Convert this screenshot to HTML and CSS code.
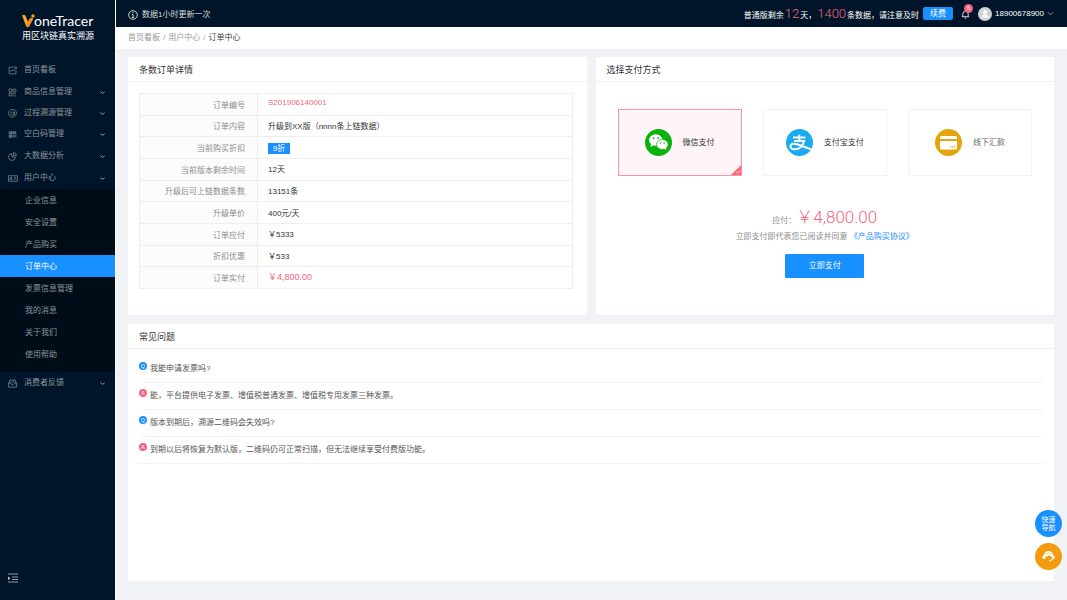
FILE: index.html
```html
<!DOCTYPE html>
<html lang="zh-CN">
<head>
<meta charset="utf-8">
<meta name="viewport" content="width=device-width, initial-scale=1">
<title>订单中心</title>
<link rel="stylesheet" href="styles.css">
</head>
<body>
<div class="app">
  <aside class="sidebar">
    <div class="brand">
      <div class="logo">
        <svg class="logo-mark" viewBox="0 0 13 14" aria-hidden="true"><path d="M0 1.500C1.500.5 3 .7 3.600 2L6 7.500l2-3.300c.9-1 2.700-.5 3.300.5L7.500 12c-.9 1.700-2.700 1.700-3.500 0z" fill="#f5941d"/><path d="M1.200 1.300C3 3 4.500 5.500 5.500 10L3.500 8z" fill="#ffb83d"/><circle cx="11" cy="2" r="1.700" fill="#f9a11b"/></svg>
        <span>oneTracer</span>
      </div>
      <p class="slogan">用区块链真实溯源</p>
    </div>
    <nav class="menu">
      <a class="item" href="#"><svg class="ico" viewBox="0 0 16 16"><path d="M14 7v7H2V2h8M4 10l3-3 2 2 5-6M11 2h4v3"/></svg><span>首页看板</span></a>
      <a class="item" href="#"><svg class="ico" viewBox="0 0 16 16"><path d="M2 2h5v5H2zM9 2h5v5H9zM2 9h5v5H2zM9 10h5M9 14h5"/></svg><span>商品信息管理</span><svg class="chev" viewBox="0 0 8 8"><path d="M1.500 3 4 5l2.500-2"/></svg></a>
      <a class="item compact" href="#"><svg class="ico" viewBox="0 0 16 16"><path d="M13 12.500A7 7 0 1 1 15 8c0 4-4 4-4 1V5M11 8a3 3 0 1 1-6 0 3 3 0 0 1 6 0"/></svg><span>过程溯源管理</span><svg class="chev" viewBox="0 0 8 8"><path d="M1.500 3 4 5l2.500-2"/></svg></a>
      <a class="item" href="#"><svg class="ico" viewBox="0 0 16 16"><path d="M2 3h5v4H2zM9 3h5v4H9zM2 9h5v4H2zM9 9v4M11.500 9v4M14 9v4M2 5h12M2 11h5"/></svg><span>空白码管理</span><svg class="chev" viewBox="0 0 8 8"><path d="M1.500 3 4 5l2.500-2"/></svg></a>
      <a class="item" href="#"><svg class="ico" viewBox="0 0 16 16"><path d="M7 3a6 6 0 1 0 6 6H7zM9.500 1A6 6 0 0 1 15 6.500H9.500z"/></svg><span>大数据分析</span><svg class="chev" viewBox="0 0 8 8"><path d="M1.500 3 4 5l2.500-2"/></svg></a>
      <a class="item" href="#"><svg class="ico wide" viewBox="0 0 18 16"><path d="M1 3h16v10H1zM3 11c0-3 5-3 5 0M7 7a1.500 1.500 0 1 1-3 0 1.500 1.500 0 0 1 3 0M11 6h4M11 9h4"/></svg><span>用户中心</span><svg class="chev" viewBox="0 0 8 8"><path d="M1.500 3 4 5l2.500-2"/></svg></a>
      <div class="submenu">
        <a href="#">企业信息</a>
        <a href="#">安全设置</a>
        <a href="#">产品购买</a>
        <a class="active" href="#" aria-current="page">订单中心</a>
        <a href="#">发票信息管理</a>
        <a href="#">我的消息</a>
        <a href="#">关于我们</a>
        <a href="#">使用帮助</a>
      </div>
      <a class="item" href="#"><svg class="ico" viewBox="0 0 16 16"><path d="M3 7V2h10v5M1 6v8.500h14V6L8 10.500zM5.500 4.500l2 2 3-3"/></svg><span>消费者反馈</span><svg class="chev" viewBox="0 0 8 8"><path d="M1.500 3 4 5l2.500-2"/></svg></a>
    </nav>
    <button class="collapse" type="button" aria-label="收起菜单"><svg viewBox="0 0 10 10"><path d="M0 1h10M4 4h6M4 6.500h6M0 9h10" stroke="#8e9ba6" stroke-width="1" fill="none"/><path d="M0 3.500 2.500 5.200 0 7z" fill="#c5ccd2"/></svg></button>
  </aside>

  <div class="page">
    <header class="topbar">
      <div class="notice">
        <svg viewBox="0 0 10 10" aria-hidden="true"><circle cx="5" cy="5" r="4.300"/><path d="M5 2v1M4 4.300h1v3M3.800 7.400h2.400"/></svg>
        <span>数据1小时更新一次</span>
      </div>
      <div class="account">
        <p class="quota"><span>普通版剩余</span><b>12</b><span>天，</span><b>1400</b><span>条数据，请注意及时</span></p>
        <button class="renew" type="button">续费</button>
        <button class="bell" type="button" aria-label="消息"><svg viewBox="0 0 10 10"><path d="M1 8h8M2 8V5a3 3 0 0 1 6 0v3M4 9.500h2M5 1v1"/></svg><span class="badge">6</span></button>
        <button class="user" type="button">
          <svg class="avatar" viewBox="0 0 14 14" aria-hidden="true"><circle cx="7" cy="7" r="7" fill="#d0d3d6"/><circle cx="7" cy="5.300" r="2.100" fill="#fff"/><path d="M3.300 10.500c0-4 7.400-4 7.400 0z" fill="#fff"/></svg>
          <span>18900678900</span>
          <svg class="down" viewBox="0 0 8 8" aria-hidden="true"><path d="M1 2.500 4 5.500l3-3"/></svg>
        </button>
      </div>
    </header>
    <nav class="crumbs" aria-label="导航"><a href="#">首页看板</a><span>/</span><a href="#">用户中心</a><span>/</span><strong>订单中心</strong></nav>

    <main class="content">
      <div class="columns">
        <section class="card">
          <h2>条数订单详情</h2>
          <div class="detail">
            <table>
              <tr><th scope="row">订单编号</th><td class="red">S201906140001</td></tr>
              <tr><th scope="row">订单内容</th><td>升级到XX版（nnnn条上链数据）</td></tr>
              <tr><th scope="row">当前购买折扣</th><td><span class="tag">9折</span></td></tr>
              <tr><th scope="row">当前版本剩余时间</th><td>12天</td></tr>
              <tr><th scope="row">升级后可上链数据条数</th><td>13151条</td></tr>
              <tr><th scope="row">升级单价</th><td>400元/天</td></tr>
              <tr><th scope="row">订单应付</th><td>￥5333</td></tr>
              <tr><th scope="row">折扣优惠</th><td>￥533</td></tr>
              <tr><th scope="row">订单实付</th><td class="red total">￥4,800.00</td></tr>
            </table>
          </div>
        </section>

        <section class="card">
          <h2>选择支付方式</h2>
          <div class="pay">
            <div class="options">
              <label class="option"><input type="radio" name="pay" checked>
                <svg class="pay-ico" viewBox="0 0 27 27" aria-hidden="true"><circle cx="13.500" cy="13.500" r="13.500" fill="#09b30c"/><ellipse cx="10.800" cy="11" rx="6.800" ry="5.800" fill="#fff"/><path d="M6 14.500 5.500 18l3.500-2z" fill="#fff"/><circle cx="8.500" cy="9.200" r=".9" fill="#09b30c"/><circle cx="13" cy="9.200" r=".9" fill="#09b30c"/><ellipse cx="17.300" cy="15.500" rx="5.900" ry="5" fill="#fff" stroke="#09b30c" stroke-width=".7"/><path d="m19 19.500 2.300 1.600-.4-2.800z" fill="#fff"/><circle cx="15.400" cy="14" r=".8" fill="#09b30c"/><circle cx="19.200" cy="14" r=".8" fill="#09b30c"/></svg>
                <span>微信支付</span>
                <svg class="check" viewBox="0 0 10 10" aria-hidden="true"><path d="M10 0v10H0z" fill="#fb6980"/><path d="m5.300 7 1.300 1.200L9 5.700" fill="none" stroke="#fff" stroke-width=".8"/></svg>
              </label>
              <label class="option"><input type="radio" name="pay">
                <svg class="pay-ico" viewBox="0 0 27 27" aria-hidden="true"><defs><clipPath id="disc"><circle cx="13.500" cy="13.500" r="13.500"/></clipPath></defs><circle cx="13.500" cy="13.500" r="13.500" fill="#1aaaed"/><path clip-path="url(#disc)" d="M7 8.500h12.500M13.300 5.800v6M8 12h10.300c-1.500 4.500-5 8.300-9.300 8.300-3 0-4.500-1.200-4.500-2.800 0-3.300 4.500-3.200 7.500-2C16.500 17.200 20 18.500 27 21" fill="none" stroke="#fff" stroke-width="1.900"/></svg>
                <span>支付宝支付</span>
                <svg class="check" viewBox="0 0 10 10" aria-hidden="true"><path d="M10 0v10H0z" fill="#fb6980"/><path d="m5.300 7 1.300 1.200L9 5.700" fill="none" stroke="#fff" stroke-width=".8"/></svg>
              </label>
              <label class="option"><input type="radio" name="pay">
                <svg class="pay-ico" viewBox="0 0 27 27" aria-hidden="true"><circle cx="13.500" cy="13.500" r="13.500" fill="#e2a50c"/><path d="M6.500 7h14a1.500 1.500 0 0 1 1.500 1.500V10H5V8.500A1.500 1.500 0 0 1 6.500 7zM5 12h17v7a1.500 1.500 0 0 1-1.500 1.500h-14A1.500 1.500 0 0 1 5 19z" fill="#fff"/><path d="M15.200 17.800h5.200" stroke="#e2a50c" stroke-dasharray="1.400 .4"/></svg>
                <span class="light">线下汇款</span>
                <svg class="check" viewBox="0 0 10 10" aria-hidden="true"><path d="M10 0v10H0z" fill="#fb6980"/><path d="m5.300 7 1.300 1.200L9 5.700" fill="none" stroke="#fff" stroke-width=".8"/></svg>
              </label>
            </div>
            <p class="amount"><span>应付：</span><b>￥4,800.00</b></p>
            <p class="agree">立即支付即代表您已阅读并同意 <a href="#">《产品购买协议》</a></p>
            <button class="submit" type="button">立即支付</button>
          </div>
        </section>
      </div>

      <section class="card faq">
        <h2>常见问题</h2>
        <ul>
          <li><i class="q">Q</i><span>我能申请发票吗?</span></li>
          <li><i class="a">A</i><span>能，平台提供电子发票、增值税普通发票、增值税专用发票三种发票。</span></li>
          <li><i class="q">Q</i><span>版本到期后，溯源二维码会失效吗?</span></li>
          <li><i class="a">A</i><span>到期以后将恢复为默认版，二维码仍可正常扫描，但无法继续享受付费版功能。</span></li>
        </ul>
      </section>
    </main>
  </div>

  <div class="floating">
    <button class="quick" type="button">快速<br>导航</button>
    <button class="service" type="button" aria-label="在线客服"><svg viewBox="0 0 14 14"><path d="M2 6a5 5 0 0 1 10 0l1.500.5v2.800l-1.800.5C11 11.500 9.500 12.500 7.500 12.500V11.200c2.500-.3 3.500-2 3.500-4-1.500 0-2.500-.5-3.200-1.500C6.500 7 5 7.300 3.300 7.300c0 1 .2 1.700.7 2.500H2L.5 9V6.500z" fill="#fff"/><path d="M3 4.700C5 2.500 9 2.500 11 4.700" fill="none" stroke="#f39c12" stroke-width=".6"/></svg></button>
  </div>
</div>
</body>
</html>
```
FILE: styles.css
```css
* { box-sizing: border-box; }
body {
  margin: 0;
  background: #f0f2f6;
  color: #333;
  font: 8px/12px "Liberation Sans", "Noto Sans CJK SC", sans-serif;
}
h2, p, ul { margin: 0; padding: 0; }
ul { list-style: none; }
a { color: inherit; text-decoration: none; }
button { margin: 0; padding: 0; border: 0; background: none; color: inherit; font: inherit; cursor: pointer; }
svg { display: block; flex: none; }
.app { display: flex; min-height: 100vh; }

/* Sidebar */
.sidebar {
  display: flex;
  flex: none;
  flex-direction: column;
  width: 116px;
  background: #001529;
  color: #8b959f;
  border-right: 1px solid #fff;
}
.brand { height: 59px; padding: 12px 0 0 22px; color: #fff; }
.logo { display: flex; align-items: center; height: 17px; font: 14px/16px Lato, sans-serif; }
.logo-mark { width: 13px; height: 14px; margin-right: -1px; }
.slogan { font-size: 9px; line-height: 15px; }
.item { display: flex; align-items: center; height: 22px; padding: 0 9px 0 8px; }
.compact { height: 20px; }
.item span { flex: 1; }
.ico { width: 9px; height: 9px; margin-right: 7px; fill: none; stroke: #84909b; stroke-width: 1.3; }
.ico.wide { width: 10px; margin-right: 6px; }
.chev { width: 7px; height: 7px; fill: none; stroke: #a5adb4; }
.submenu { padding-bottom: 7px; background: #000c17; }
.submenu a { display: block; height: 22px; padding-left: 25px; line-height: 23px; }
.submenu .active { background: #1890ff; color: #fff; }
.collapse { width: 10px; margin: auto 0 17px 8px; }
.collapse svg { width: 10px; height: 10px; }

/* Top bar */
.page { display: flex; flex: 1; flex-direction: column; min-width: 0; }
.topbar {
  display: flex;
  align-items: center;
  justify-content: space-between;
  height: 27px;
  padding: 0 13px 0 12px;
  background: #001529;
  color: #fff;
}
.notice { display: flex; align-items: center; gap: 4px; padding-top: 3px; color: #d5d9dd; }
.notice svg { width: 10px; height: 10px; fill: none; stroke: #fff; stroke-width: .8; }
.account { display: flex; align-items: center; }
.quota { display: flex; align-items: baseline; gap: 1px; padding-top: 2px; line-height: 18px; }
.quota b { color: #f5657c; font-family: Roboto, sans-serif; font-size: 13px; font-weight: 300; }
.renew { width: 30px; height: 13px; margin-left: 4px; border-radius: 2px; background: #1890ff; line-height: 13px; }
.bell { position: relative; margin-left: 8px; }
.bell svg { width: 9px; height: 10px; fill: none; stroke: #fff; stroke-width: .9; }
.badge {
  position: absolute;
  top: -5px;
  right: -3px;
  width: 9px;
  height: 9px;
  border-radius: 50%;
  background: #f5657c;
  font-size: 6px;
  line-height: 9px;
}
.user { display: flex; align-items: center; gap: 3px; margin-left: 8px; }
.avatar { width: 14px; height: 14px; }
.down { width: 7px; height: 7px; fill: none; stroke: #c5ccd2; stroke-width: .8; }

.crumbs { display: flex; align-items: center; gap: 3px; height: 22px; padding: 0 12px; background: #fff; color: #999; }
.crumbs strong { color: #444; font-weight: 400; }

/* Cards */
.content { display: flex; flex: 1; flex-direction: column; gap: 9px; padding: 8px 13px 19px 12px; }
.columns { display: grid; grid-template-columns: 1fr 1fr; gap: 9px; }
.card { border-radius: 1px; background: #fff; }
.card h2 {
  height: 25px;
  padding: 0 11px;
  border-bottom: 1px solid #f0f0f2;
  font-size: 9px;
  font-weight: 400;
  line-height: 27px;
}
.faq { flex: 1; }

.detail { padding: 11px 14px 26px 11px; }
table { width: 100%; height: 196px; border: 1px solid #eeeef0; border-collapse: collapse; }
th, td { padding: 2px 0 0; border: 1px solid #eeeef0; border-width: 1px 0; }
th {
  width: 118px;
  padding: 3px 12px 0 0;
  border-right-width: 1px;
  background: #fcfcfc;
  color: #8c8c8c;
  font-weight: 400;
  text-align: right;
}
td { padding-left: 10px; }
.red { padding-top: 0; padding-bottom: 2px; color: #f5657c; }
.total { font-size: 9px; }
.tag { display: block; width: 22px; background: #1890ff; color: #fff; line-height: 11px; text-align: center; }

/* Payment */
.pay { display: flex; flex-direction: column; align-items: center; padding: 27px 22px 37px; }
.options { display: grid; grid-template-columns: repeat(3, 1fr); gap: 21px; width: 100%; }
.option {
  position: relative;
  display: flex;
  align-items: center;
  justify-content: center;
  gap: 11px;
  height: 67px;
  border: 1px solid #f3f3f4;
  cursor: pointer;
}
.option input { position: absolute; opacity: 0; }
.option:has(input:checked) { border-color: #fb93a4; background: #fff4f7; }
.pay-ico { width: 27px; height: 27px; }
.light { color: #666; }
.check { position: absolute; right: 0; bottom: 0; display: none; width: 10px; height: 10px; }
.option input:checked ~ .check { display: block; }
.amount { display: flex; align-items: baseline; height: 24px; margin-top: 29px; color: #8c8c8c; line-height: 24px; }
.amount b { color: #f5657c; font-family: Roboto, "Noto Sans CJK SC", sans-serif; font-size: 17px; font-weight: 300; }
.agree { margin-top: 2px; color: #8c8c8c; }
.agree a { color: #1890ff; }
.submit { width: 79px; height: 24px; margin-top: 11px; border-radius: 1px; background: #1890ff; color: #fff; }

/* FAQ */
.faq ul { padding: 7px 11px; }
.faq li { display: flex; align-items: center; gap: 3px; height: 27px; border-bottom: 1px solid #f3f3f4; color: #555; }
.faq i {
  width: 8px;
  height: 8px;
  margin-bottom: 6px;
  border-radius: 50%;
  color: #fff;
  font-size: 5px;
  font-style: normal;
  line-height: 8px;
  text-align: center;
}
.q { background: #1890ff; }
.a { background: #f5657c; }

/* Floating actions */
.floating { position: fixed; right: 5px; bottom: 30px; display: flex; flex-direction: column; gap: 6px; }
.floating button {
  display: flex;
  align-items: center;
  justify-content: center;
  width: 27px;
  height: 27px;
  border-radius: 50%;
  color: #fff;
  font-size: 7px;
  line-height: 8px;
}
.quick { background: #1890ff; }
.service { background: #f39c12; }
.service svg { width: 13px; height: 13px; }
```
